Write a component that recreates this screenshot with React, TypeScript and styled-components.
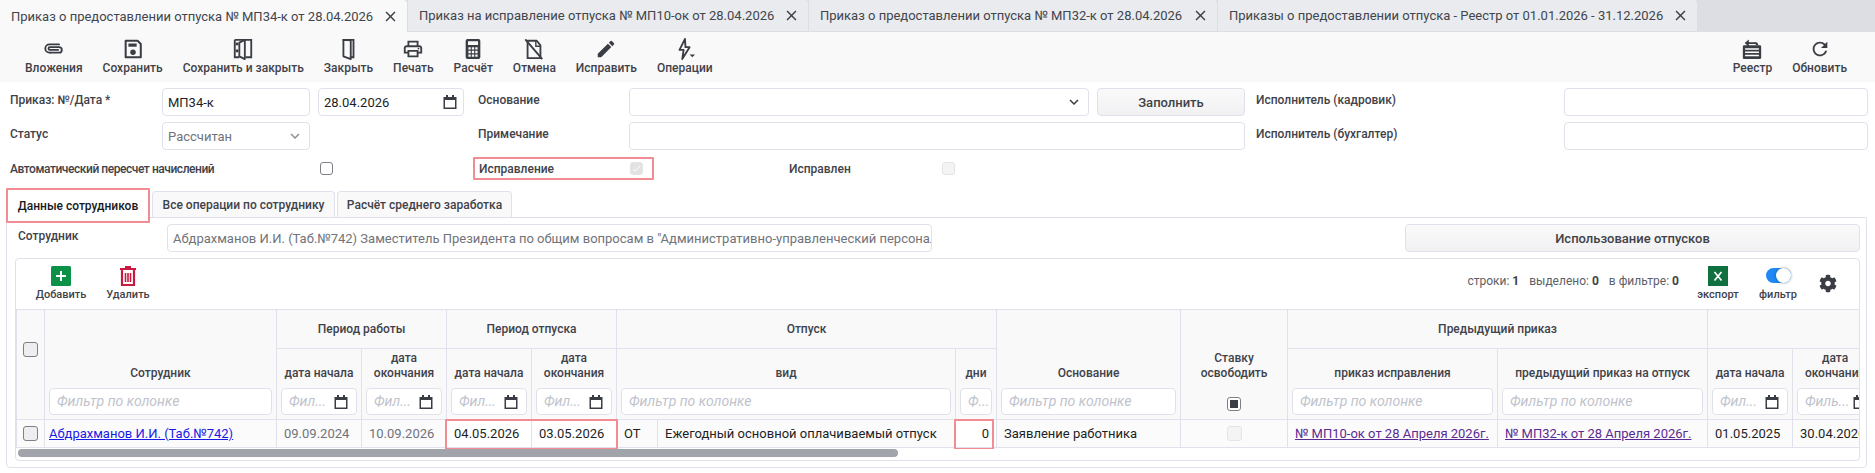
import React from 'react';
import styled, { createGlobalStyle } from 'styled-components';
import { MdOutlinePrint, MdEdit, MdRefresh, MdClose, MdExpandMore, MdCheck } from 'react-icons/md';
import { FaCog } from 'react-icons/fa';

const GlobalStyle = createGlobalStyle`
  html, body { margin: 0; padding: 0; background: #fff; }
  body { font-family: Roboto, "Noto Sans", sans-serif; color: #3f4249; width: 1875px; height: 473px; overflow: hidden; }
  * { box-sizing: border-box; }
`;

const Calendar = ({ size = 16 }: { size?: number }) => (
  <svg width={size} height={size} viewBox="0 0 16 16" fill="none">
    <path d="M4 1h2v2h4V1h2v2h2.5v12h-13V3H4z" fill="#3a3d44" />
    <rect x="3" y="6" width="10" height="7.5" fill="#fff" />
  </svg>
);

const ClipIcon = () => (
  <svg viewBox="0 0 24 24" fill="none">
    <path d="M8 16h9.500a3 3 0 0 0 0-6H7.500a1.500 1.500 0 0 0 0 3h9" stroke="#3a3d44" strokeWidth="2" strokeLinecap="round" />
    <path d="M8 16H7a4.500 4.500 0 0 1 0-9h10.500" stroke="#3a3d44" strokeWidth="2" strokeLinecap="round" />
  </svg>
);

const SaveIcon = () => (
  <svg viewBox="0 0 24 24" fill="none">
    <path d="M4 3h13l3.500 3.500V21H4z" stroke="#3a3d44" strokeWidth="2.200" strokeLinejoin="round" />
    <rect x="7" y="6" width="9" height="3.500" fill="#3a3d44" />
    <circle cx="12" cy="15.500" r="3" fill="#3a3d44" />
  </svg>
);

const SaveCloseIcon = () => (
  <svg viewBox="0 0 24 24" fill="none">
    <path d="M3 2h18v19h-6M3 2v19h5" stroke="#3a3d44" strokeWidth="2" />
    <path d="M14 2v21l-6-3V5z" stroke="#3a3d44" strokeWidth="2" strokeLinejoin="round" />
    <rect x="4" y="5" width="3" height="3" fill="#3a3d44" />
    <circle cx="5.500" cy="14" r="1.700" fill="#3a3d44" />
  </svg>
);

const DoorIcon = () => (
  <svg viewBox="0 0 24 24" fill="none">
    <path d="M6 2h12v19h-4" stroke="#3a3d44" strokeWidth="2" />
    <path d="M15 2.500V23l-8-3V2z" stroke="#3a3d44" strokeWidth="2" strokeLinejoin="round" />
  </svg>
);

const CalcIcon = () => (
  <svg viewBox="0 0 24 24">
    <path fillRule="evenodd" d="M6 1h12a2 2 0 0 1 2 2v18a2 2 0 0 1-2 2H6a2 2 0 0 1-2-2V3a2 2 0 0 1 2-2zm.500 2.500v4h11v-4zM7 10v2.500h2.500V10zm3.700 0v2.500h2.600V10zm3.800 0v2.500H17V10zM7 14v2.500h2.500V14zm3.700 0v2.500h2.600V14zm3.800 0v2.500H17V14zM7 18v2.500h2.500V18zm3.700 0v2.500h2.600V18zm3.800 0v2.500H17V18z" fill="#3a3d44" />
  </svg>
);

const CancelDocIcon = () => (
  <svg viewBox="0 0 24 24" fill="none">
    <path d="M5 3h10l4 5v14H5z" stroke="#3a3d44" strokeWidth="2" strokeLinejoin="round" />
    <path d="M14 3v6h5" stroke="#3a3d44" strokeWidth="1.500" />
    <path d="M2.500 1.500L21 23" stroke="#3a3d44" strokeWidth="2" />
  </svg>
);

const BoltIcon = () => (
  <svg viewBox="0 0 24 24" fill="none">
    <path d="M12 1L6 13h4.500L9 23l8-13h-4.500z" stroke="#3a3d44" strokeWidth="2" strokeLinejoin="round" />
    <path d="M17 18h6l-3 3z" fill="#3a3d44" />
  </svg>
);

const RegistryIcon = () => (
  <svg viewBox="0 0 24 24" fill="none">
    <rect x="2" y="8" width="20" height="15" rx="1.500" fill="#3a3d44" />
    <path d="M4.500 12h15M4.500 15.500h15M4.500 19h15" stroke="#fff" strokeWidth="1.600" />
    <path d="M7 5.500h8a3 3 0 0 1 3 2.500" stroke="#3a3d44" strokeWidth="2" />
    <path d="M8.500 1.500v8L4 5.500z" fill="#3a3d44" />
  </svg>
);

const PlusIcon = () => (
  <svg width="20" height="20" viewBox="0 0 20 20">
    <rect width="20" height="20" rx="1.500" fill="#0c9247" />
    <path d="M10 5v10M5 10h10" stroke="#fff" strokeWidth="2" />
  </svg>
);

const TrashIcon = () => (
  <svg width="16" height="20" viewBox="0 0 16 20" fill="none">
    <path d="M5 1h6M0 3h16" stroke="#c8193f" strokeWidth="2" />
    <path d="M2 4v15h12V4" stroke="#c8193f" strokeWidth="2.200" />
    <path d="M5.500 7v9M8 7v9M10.500 7v9" stroke="#c8193f" strokeWidth="1.600" />
  </svg>
);

const ExcelIcon = () => (
  <svg width="20" height="20" viewBox="0 0 20 20">
    <rect width="20" height="20" fill="#107040" />
    <path d="M6.500 6l7 8.500M13.500 6l-7 8.500" stroke="#fff" strokeWidth="1.700" />
  </svg>
);

const Page = styled.div`
  width: 1875px;
  height: 473px;
  display: flex;
  flex-direction: column;
  overflow: hidden;
`;

const TabBar = styled.div`
  height: 32px;
  background: #dcdee3;
  display: flex;
  gap: 1px;
`;

const DocTab = styled.div<{ $active?: boolean; $w: number }>`
  width: ${p => p.$w}px;
  height: 32px;
  padding: 0 8px 0 11px;
  display: flex;
  align-items: center;
  justify-content: space-between;
  font-size: 13px;
  white-space: nowrap;
  color: #42454c;
  background: ${p => (p.$active ? '#f9f9fa' : '#e9ebef')};
  border-radius: 0 4px 0 0;
  border-bottom: ${p => (p.$active ? 'none' : '1px solid #dcdee3')};
  svg { color: #3a3d44; flex: none; }
`;

const Toolbar = styled.div`
  height: 50px;
  background: #f9f9fa;
  display: flex;
  justify-content: space-between;
  padding: 6px 28px 0 25px;
`;

const ToolGroup = styled.div`
  display: flex;
  gap: 20px;
`;

const ToolItem = styled.div`
  display: flex;
  flex-direction: column;
  align-items: center;
  height: 44px;
  font-size: 12px;
  font-weight: 500;
  color: #3f4249;
  white-space: nowrap;
  svg { width: 22px; height: 22px; flex: none; color: #3a3d44; }
  span { line-height: 16px; }
`;

const Form = styled.div`
  display: grid;
  grid-template-columns: 152px 148px 8px 146px 14px 151px 460px 8px 148px 11px 308px 304px;
  grid-template-rows: 28px 28px;
  row-gap: 6px;
  padding: 6px 0 0 10px;
`;

const FieldLabel = styled.div<{ $col: string; $row: number }>`
  grid-column: ${p => p.$col};
  grid-row: ${p => p.$row};
  font-size: 12px;
  font-weight: 500;
  color: #3f4249;
  line-height: 16px;
  padding-top: 4px;
  white-space: nowrap;
`;

const Field = styled.div<{ $col: string; $row: number; $muted?: boolean }>`
  grid-column: ${p => p.$col};
  grid-row: ${p => p.$row};
  height: 28px;
  padding: 0 5px;
  display: flex;
  align-items: center;
  justify-content: space-between;
  border: 1px solid #e1e1ec;
  border-radius: 4px;
  background: #fff;
  font-size: 13px;
  color: ${p => (p.$muted ? '#70737a' : '#1d1f24')};
`;

const ActionButton = styled.div<{ $col?: string; $row?: number }>`
  grid-column: ${p => p.$col || 'auto'};
  grid-row: ${p => p.$row || 'auto'};
  height: 28px;
  display: flex;
  align-items: center;
  justify-content: center;
  border: 1px solid #e1e1ec;
  border-radius: 4px;
  background: linear-gradient(#fafafa, #f1f1f3);
  font-size: 13px;
  font-weight: 500;
  color: #3f4249;
`;

const FlagRow = styled.div`
  height: 23px;
  margin-top: 7px;
  display: flex;
  align-items: center;
  font-size: 12px;
  font-weight: 500;
  color: #3f4249;
  white-space: nowrap;
`;

const FlagLabel = styled.div<{ $w: number; $tight?: boolean; $pl?: number }>`
  width: ${p => p.$w}px;
  padding-left: ${p => p.$pl || 0}px;
  flex: none;
  letter-spacing: ${p => (p.$tight ? '-0.45px' : 'normal')};
`;

const Box = styled.div<{ $disabled?: boolean; $size?: number; $fill?: string }>`
  width: ${p => p.$size || 13}px;
  height: ${p => p.$size || 13}px;
  flex: none;
  display: flex;
  align-items: center;
  justify-content: center;
  border-radius: 3px;
  border: 1px solid ${p => (p.$disabled ? '#e4e4e6' : '#7d8087')};
  background: ${p => p.$fill || (p.$disabled ? '#e2e2e4' : '#fff')};
  color: #fafafa;
`;

const RedFrame = styled.div`
  width: 181px;
  height: 23px;
  flex: none;
  margin-right: 135px;
  padding: 0 9px 0 4px;
  display: flex;
  align-items: center;
  justify-content: space-between;
  border: 2px solid #f18c92;
  border-radius: 1px;
`;

const SubTabs = styled.div`
  margin-top: 8px;
  padding-left: 6px;
  height: 29px;
  display: flex;
  align-items: flex-end;
  gap: 2px;
  position: relative;
  z-index: 1;
`;

const SubTab = styled.div<{ $active?: boolean; $w: number }>`
  width: ${p => p.$w}px;
  height: ${p => (p.$active ? 35 : 26)}px;
  margin-bottom: ${p => (p.$active ? -6 : 0)}px;
  display: flex;
  align-items: center;
  justify-content: center;
  font-size: 12px;
  font-weight: 500;
  white-space: nowrap;
  background: ${p => (p.$active ? '#fff' : '#f9f9fa')};
  color: ${p => (p.$active ? '#17191d' : '#3f4249')};
  border: ${p => (p.$active ? '2px solid #f18c92' : '1px solid #e1e1ec')};
  border-bottom: ${p => (p.$active ? '2px solid #f18c92' : 'none')};
  border-radius: ${p => (p.$active ? '1px' : '4px 4px 0 0')};
`;

const Panel = styled.div`
  width: 1861px;
  height: 251px;
  margin-left: 6px;
  border: 1px solid #e1e1ec;
  border-radius: 0 0 4px 4px;
  padding: 6px 6px 6px 8px;
`;

const EmployeeRow = styled.div`
  height: 28px;
  display: flex;
  align-items: center;
`;

const EmployeeLabel = styled.div`
  width: 152px;
  flex: none;
  padding: 0 0 4px 3px;
  font-size: 12px;
  font-weight: 500;
`;

const EmployeeInput = styled.div`
  width: 765px;
  height: 28px;
  flex: none;
  padding: 0 5px;
  display: flex;
  align-items: center;
  overflow: hidden;
  white-space: nowrap;
  border: 1px solid #e1e1ec;
  border-radius: 4px;
  font-size: 13px;
  color: #70737a;
`;

const UsageButton = styled(ActionButton)`
  width: 455px;
  margin-left: auto;
`;

const Grid = styled.div`
  margin-top: 6px;
  height: 203px;
  border: 1px solid #e1e1ec;
  border-radius: 4px;
  overflow: hidden;
`;

const GridTop = styled.div`
  height: 50px;
  padding-top: 7px;
  display: flex;
  align-items: flex-start;
`;

const GridTool = styled.div<{ $w: number; $ml?: number }>`
  width: ${p => p.$w}px;
  margin-left: ${p => p.$ml || 0}px;
  flex: none;
  height: 36px;
  display: flex;
  flex-direction: column;
  align-items: center;
  justify-content: space-between;
  font-size: 11px;
  font-weight: 500;
  line-height: 14px;
  color: #3f4249;
  white-space: nowrap;
`;

const Stats = styled.div`
  margin-left: auto;
  padding-top: 8px;
  display: flex;
  gap: 10px;
  font-size: 12px;
  color: #5d6067;
  b { font-weight: 700; color: #3f4249; }
`;

const Toggle = styled.div`
  width: 25px;
  height: 15px;
  margin-top: 2px;
  border-radius: 8px;
  background: #1e88f5;
  position: relative;
  &::after {
    content: '';
    position: absolute;
    right: 0;
    top: 0;
    width: 15px;
    height: 15px;
    border-radius: 50%;
    background: #fff;
    box-shadow: 0 0 3px rgba(0, 0, 0, 0.4);
  }
`;

const GearSlot = styled.div`
  width: 18px;
  margin: 8px 22px 0 22px;
  flex: none;
  display: flex;
  justify-content: center;
  color: #3a3d44;
`;

const TableClip = styled.div`
  overflow: hidden;
  height: 140px;
`;

const Table = styled.table`
  width: 1874px;
  table-layout: fixed;
  border-collapse: collapse;
  font-size: 13px;
`;

const Th = styled.th`
  background: #f9f9fa;
  border: 1px solid #e1e1ec;
  font-weight: 500;
  font-size: 12px;
  line-height: 15px;
  color: #3f4249;
  padding: 2px 4px 0;
  vertical-align: bottom;
`;

const GroupTh = styled(Th)`
  height: 39px;
  padding-top: 0;
  vertical-align: middle;
`;

const ThTitle = styled.div`
  height: 30px;
  margin-bottom: 7px;
  display: flex;
  align-items: flex-end;
  justify-content: center;
  text-align: center;
`;

const Filter = styled.div`
  height: 27px;
  margin-bottom: 4px;
  padding: 0 7px;
  display: flex;
  align-items: center;
  justify-content: space-between;
  gap: 3px;
  overflow: hidden;
  border: 1px solid #e1e1ec;
  border-radius: 4px;
  background: #fff;
  font-size: 14px;
  font-weight: 400;
  font-style: italic;
  color: #c0c3cc;
  white-space: nowrap;
  svg { flex: none; }
`;

const HeadCheckCell = styled.div`
  height: 77px;
  display: flex;
  justify-content: center;
`;

const FreeCheckCell = styled.div`
  height: 31px;
  padding-top: 9px;
  display: flex;
  justify-content: center;
`;

const Td = styled.td<{ $w?: boolean; $muted?: boolean; $right?: boolean }>`
  height: 28px;
  padding: ${p => (p.$right ? '0 7px 0 0' : '0 5px 0 7px')};
  border: 1px solid #e1e1ec;
  background: ${p => (p.$w ? '#fff' : '#fbfbfc')};
  color: ${p => (p.$muted ? '#70737a' : '#1d1f24')};
  text-align: ${p => (p.$right ? 'right' : 'left')};
  font-size: 13px;
  white-space: nowrap;
  overflow: hidden;
  position: relative;
`;

const MarkTd = styled(Td)`
  overflow: visible;
`;

const RedMark = styled.div<{ $w: number }>`
  position: absolute;
  left: -2px;
  top: -1px;
  width: ${p => p.$w}px;
  height: 31px;
  border: 2px solid #f18c92;
  border-radius: 1px;
  z-index: 2;
  pointer-events: none;
`;

const RowLink = styled.a<{ $purple?: boolean; $shift?: number }>`
  margin-left: ${p => p.$shift || 0}px;
  color: ${p => (p.$purple ? '#5b2b91' : '#1a1ae6')};
  text-decoration: underline;
  font-size: 13px;
`;

const RowCheck = styled.div`
  display: flex;
  justify-content: center;
`;

const NarrowTd = styled(Td)`
  padding: 0;
`;

const Track = styled.div`
  height: 12px;
  padding-left: 2px;
`;

const Thumb = styled.div<{ $w: number }>`
  width: ${p => p.$w}px;
  height: 8px;
  border-radius: 4px;
  background: #a1a4ab;
`;

const colWidths = [28, 232, 85, 85, 85, 85, 41, 298, 41, 184, 107, 210, 210, 85, 85, 90];
const docTabs = [
  { w: 407, t: 'Приказ о предоставлении отпуска № МП34-к от 28.04.2026', active: true },
  { w: 400, t: 'Приказ на исправление отпуска № МП10-ок от 28.04.2026' },
  { w: 408, t: 'Приказ о предоставлении отпуска № МП32-к от 28.04.2026' },
  { w: 479, t: 'Приказы о предоставлении отпуска - Реестр от 01.01.2026 - 31.12.2026' },
];

const DateFilter = ({ text = 'Фил...' }: { text?: string }) => (
  <Filter>
    {text}
    <Calendar />
  </Filter>
);

const App = () => {
  return (
    <Page>
      <GlobalStyle />
      <TabBar>
        {docTabs.map(d => (
          <DocTab key={d.t} $w={d.w} $active={d.active}>
            {d.t}
            <MdClose size={17} />
          </DocTab>
        ))}
      </TabBar>

      <Toolbar>
        <ToolGroup>
          <ToolItem><ClipIcon /><span>Вложения</span></ToolItem>
          <ToolItem><SaveIcon /><span>Сохранить</span></ToolItem>
          <ToolItem><SaveCloseIcon /><span>Сохранить и закрыть</span></ToolItem>
          <ToolItem><DoorIcon /><span>Закрыть</span></ToolItem>
          <ToolItem><MdOutlinePrint /><span>Печать</span></ToolItem>
          <ToolItem><CalcIcon /><span>Расчёт</span></ToolItem>
          <ToolItem><CancelDocIcon /><span>Отмена</span></ToolItem>
          <ToolItem><MdEdit /><span>Исправить</span></ToolItem>
          <ToolItem><BoltIcon /><span>Операции</span></ToolItem>
        </ToolGroup>
        <ToolGroup>
          <ToolItem><RegistryIcon /><span>Реестр</span></ToolItem>
          <ToolItem><MdRefresh /><span>Обновить</span></ToolItem>
        </ToolGroup>
      </Toolbar>

      <Form>
        <FieldLabel $col="1" $row={1}>Приказ: №/Дата *</FieldLabel>
        <Field $col="2" $row={1}>МП34-к</Field>
        <Field $col="4" $row={1}>28.04.2026<Calendar /></Field>
        <FieldLabel $col="6" $row={1}>Основание</FieldLabel>
        <Field $col="7" $row={1}><span />
          <MdExpandMore size={18} color="#3a3d44" />
        </Field>
        <ActionButton $col="9" $row={1}>Заполнить</ActionButton>
        <FieldLabel $col="11" $row={1}>Исполнитель (кадровик)</FieldLabel>
        <Field $col="12" $row={1} />

        <FieldLabel $col="1" $row={2}>Статус</FieldLabel>
        <Field $col="2" $row={2} $muted>Рассчитан<MdExpandMore size={18} color="#8b8e95" /></Field>
        <FieldLabel $col="6" $row={2}>Примечание</FieldLabel>
        <Field $col="7 / 10" $row={2} />
        <FieldLabel $col="11" $row={2}>Исполнитель (бухгалтер)</FieldLabel>
        <Field $col="12" $row={2} />
      </Form>

      <FlagRow>
        <FlagLabel $w={320} $tight $pl={10}>Автоматический пересчет начислений</FlagLabel>
        <Box />
        <FlagLabel $w={140} />
        <RedFrame>
          Исправление
          <Box $disabled><MdCheck size={13} /></Box>
        </RedFrame>
        <FlagLabel $w={153}>Исправлен</FlagLabel>
        <Box $disabled $fill="#f4f4f5" />
      </FlagRow>

      <SubTabs>
        <SubTab $active $w={144}>Данные сотрудников</SubTab>
        <SubTab $w={183}>Все операции по сотруднику</SubTab>
        <SubTab $w={175}>Расчёт среднего заработка</SubTab>
      </SubTabs>

      <Panel>
        <EmployeeRow>
          <EmployeeLabel>Сотрудник</EmployeeLabel>
          <EmployeeInput>Абдрахманов И.И. (Таб.№742) Заместитель Президента по общим вопросам в "Административно-управленческий персонал"</EmployeeInput>
          <UsageButton>Использование отпусков</UsageButton>
        </EmployeeRow>

        <Grid>
          <GridTop>
            <GridTool $w={52} $ml={19}><PlusIcon />Добавить</GridTool>
            <GridTool $w={44} $ml={19}><TrashIcon />Удалить</GridTool>
            <Stats>
              <span>строки: <b>1</b></span>
              <span>выделено: <b>0</b></span>
              <span>в фильтре: <b>0</b></span>
            </Stats>
            <GridTool $w={42} $ml={18}><ExcelIcon />экспорт</GridTool>
            <GridTool $w={38} $ml={20}><Toggle />фильтр</GridTool>
            <GearSlot><FaCog size={19} /></GearSlot>
          </GridTop>

          <TableClip>
            <Table>
              <colgroup>
                {colWidths.map((w, i) => <col key={i} style={{ width: w }} />)}
              </colgroup>
              <thead>
                <tr>
                  <Th rowSpan={2}><HeadCheckCell><Box $size={15} $fill="#eeeef0" /></HeadCheckCell></Th>
                  <Th rowSpan={2}><ThTitle>Сотрудник</ThTitle><Filter>Фильтр по колонке</Filter></Th>
                  <GroupTh colSpan={2}>Период работы</GroupTh>
                  <GroupTh colSpan={2}>Период отпуска</GroupTh>
                  <GroupTh colSpan={3}>Отпуск</GroupTh>
                  <Th rowSpan={2}><ThTitle>Основание</ThTitle><Filter>Фильтр по колонке</Filter></Th>
                  <Th rowSpan={2}>
                    <ThTitle>Ставку<br />освободить</ThTitle>
                    <FreeCheckCell><Box $size={14}><svg width="8" height="8"><rect width="8" height="8" fill="#3a3d44" /></svg></Box></FreeCheckCell>
                  </Th>
                  <GroupTh colSpan={2}>Предыдущий приказ</GroupTh>
                  <GroupTh colSpan={3} />
                </tr>
                <tr>
                  <Th><ThTitle>дата начала</ThTitle><DateFilter /></Th>
                  <Th><ThTitle>дата<br />окончания</ThTitle><DateFilter /></Th>
                  <Th><ThTitle>дата начала</ThTitle><DateFilter /></Th>
                  <Th><ThTitle>дата<br />окончания</ThTitle><DateFilter /></Th>
                  <Th colSpan={2}><ThTitle>вид</ThTitle><Filter>Фильтр по колонке</Filter></Th>
                  <Th><ThTitle>дни</ThTitle><Filter>Ф...</Filter></Th>
                  <Th><ThTitle>приказ исправления</ThTitle><Filter>Фильтр по колонке</Filter></Th>
                  <Th><ThTitle>предыдущий приказ на отпуск</ThTitle><Filter>Фильтр по колонке</Filter></Th>
                  <Th><ThTitle>дата начала</ThTitle><DateFilter /></Th>
                  <Th><ThTitle>дата<br />окончания</ThTitle><DateFilter text="Филь..." /></Th>
                  <Th />
                </tr>
              </thead>
              <tbody>
                <tr>
                  <NarrowTd><RowCheck><Box $size={15} $fill="#eeeef0" /></RowCheck></NarrowTd>
                  <Td><RowLink $shift={-3}>Абдрахманов И.И. (Таб.№742)</RowLink></Td>
                  <Td $muted>09.09.2024</Td>
                  <Td $muted>10.09.2026</Td>
                  <MarkTd $w>04.05.2026<RedMark $w={173} /></MarkTd>
                  <Td $w>03.05.2026</Td>
                  <Td>ОТ</Td>
                  <Td>Ежегодный основной оплачиваемый отпуск</Td>
                  <MarkTd $w $right>0<RedMark $w={40} /></MarkTd>
                  <Td>Заявление работника</Td>
                  <NarrowTd><RowCheck><Box $size={15} $disabled $fill="#f4f4f5" /></RowCheck></NarrowTd>
                  <Td><RowLink $purple>№ МП10-ок от 28 Апреля 2026г.</RowLink></Td>
                  <Td><RowLink $purple>№ МП32-к от 28 Апреля 2026г.</RowLink></Td>
                  <Td>01.05.2025</Td>
                  <Td>30.04.2026</Td>
                  <Td />
                </tr>
              </tbody>
            </Table>
          </TableClip>
          <Track><Thumb $w={880} /></Track>
        </Grid>
      </Panel>
    </Page>
  );
};

export default App;
